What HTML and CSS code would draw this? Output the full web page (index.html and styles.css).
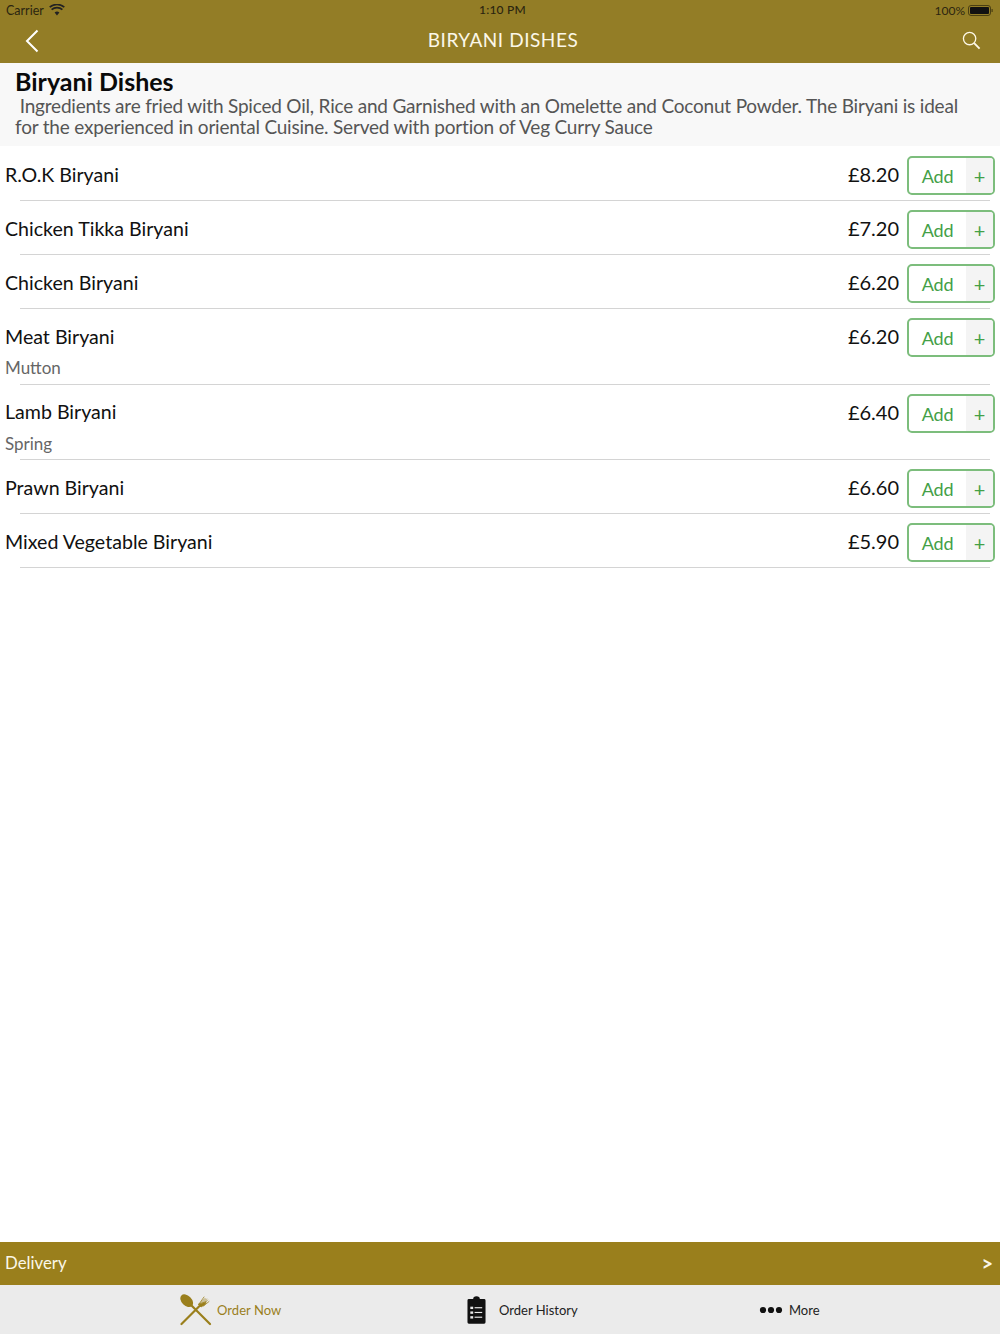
FILE: index.html
```html
<!DOCTYPE html>
<html lang="en">
<head>
<meta charset="utf-8">
<title>Biryani Dishes</title>
<link rel="stylesheet" href="styles.css">
</head>
<body>
<div class="app">
  <header class="topbar">
    <div class="status">
      <div class="status-left">
        <span>Carrier</span>
        <svg class="wifi" width="16" height="12" viewBox="0 0 16 12"><path d="M8 11.500 5.600 8.600a3.800 3.800 0 0 1 4.800 0z" fill="#222"/><path d="M2.600 5.600a8.200 8.200 0 0 1 10.800 0M.7 3.200a11.200 11.200 0 0 1 14.600 0" fill="none" stroke="#222" stroke-width="1.700"/></svg>
      </div>
      <span class="status-time">1:10 PM</span>
      <div class="status-right">
        <span>100%</span>
        <svg width="25" height="11" viewBox="0 0 25 11"><rect x=".5" y=".5" width="22" height="10" rx="2.500" fill="none" stroke="#4a3f12"/><rect x="2" y="2" width="19" height="7" rx="1" fill="#111"/><rect x="23.500" y="4" width="1.200" height="3" fill="#4a3f12"/></svg>
      </div>
    </div>
    <nav class="nav">
      <svg class="back" width="14" height="24" viewBox="0 0 14 24"><path d="M12.500 1.500 2 12l10.500 10.500" fill="none" stroke="#fff" stroke-width="2"/></svg>
      <h1 class="nav-title">BIRYANI DISHES</h1>
      <svg class="search" width="19" height="19" viewBox="0 0 20 20"><circle cx="8" cy="8" r="6.500" fill="none" stroke="#fdf8e6" stroke-width="1.400"/><path d="m12.800 12.800 5.700 5.700" stroke="#fdf8e6" stroke-width="2"/></svg>
    </nav>
  </header>

  <section class="intro">
    <h2 class="intro-title">Biryani Dishes</h2>
    <p class="intro-text">&nbsp;Ingredients are fried with Spiced Oil, Rice and Garnished with an Omelette and Coconut Powder. The Biryani is ideal for the experienced in oriental Cuisine. Served with portion of Veg Curry Sauce</p>
  </section>

  <main class="list">
    <div class="row">
      <div class="row-main"><span class="dish">R.O.K Biryani</span><span class="price">£8.20</span><div class="add"><span class="add-label">Add</span><span class="add-plus">+</span></div></div>
    </div>
    <div class="row">
      <div class="row-main"><span class="dish">Chicken Tikka Biryani</span><span class="price">£7.20</span><div class="add"><span class="add-label">Add</span><span class="add-plus">+</span></div></div>
    </div>
    <div class="row">
      <div class="row-main"><span class="dish">Chicken Biryani</span><span class="price">£6.20</span><div class="add"><span class="add-label">Add</span><span class="add-plus">+</span></div></div>
    </div>
    <div class="row row-sub">
      <div class="row-main"><span class="dish">Meat Biryani</span><span class="price">£6.20</span><div class="add"><span class="add-label">Add</span><span class="add-plus">+</span></div></div>
      <div class="sub">Mutton</div>
    </div>
    <div class="row row-sub">
      <div class="row-main"><span class="dish">Lamb Biryani</span><span class="price">£6.40</span><div class="add"><span class="add-label">Add</span><span class="add-plus">+</span></div></div>
      <div class="sub">Spring</div>
    </div>
    <div class="row">
      <div class="row-main"><span class="dish">Prawn Biryani</span><span class="price">£6.60</span><div class="add"><span class="add-label">Add</span><span class="add-plus">+</span></div></div>
    </div>
    <div class="row">
      <div class="row-main"><span class="dish">Mixed Vegetable Biryani</span><span class="price">£5.90</span><div class="add"><span class="add-label">Add</span><span class="add-plus">+</span></div></div>
    </div>
  </main>

  <div class="delivery"><span>Delivery</span><span class="delivery-arrow">&gt;</span></div>

  <footer class="tabs">
    <div class="tab tab-order">
      <svg width="32" height="32" viewBox="0 0 32 32"><ellipse cx="6.700" cy="6.700" rx="7.500" ry="5" transform="rotate(45 6.700 6.700)" fill="#9a7f1c"/><path d="M8 8 30 30M1.500 30 20 11.500" fill="none" stroke="#9a7f1c" stroke-width="2.200" stroke-linecap="round"/><path d="M18.500 10.500 21 13l4-2.500 1-2.500zM20 9.500 25 4.500M22 11.500 27.500 6M21 10.500 26.500 5M23.500 12 29 7.500M19 10 24 3" fill="#9a7f1c" stroke="#9a7f1c" stroke-width=".8" stroke-linecap="round"/></svg>
      <span class="tab-label tab-active">Order Now</span>
    </div>
    <div class="tab tab-history">
      <svg width="19" height="28" viewBox="0 0 20 29"><path d="M2 3h4.500a3.500 3 0 0 1 7 0H18a1.500 1.500 0 0 1 1.500 1.500v23A1.500 1.500 0 0 1 18 29H2a1.500 1.500 0 0 1-1.500-1.500v-23A1.500 1.500 0 0 1 2 3z" fill="#111"/><g fill="#ebebeb"><rect x="3.500" y="11" width="3" height="2.500"/><rect x="3.500" y="16" width="3" height="2.500"/><rect x="3.500" y="21" width="3" height="2.500"/><rect x="8" y="11.500" width="8" height="1.200"/><rect x="8" y="16.500" width="8" height="1.200"/><rect x="8" y="21.500" width="8" height="1.200"/></g></svg>
      <span class="tab-label">Order History</span>
    </div>
    <div class="tab tab-more">
      <svg width="24" height="8" viewBox="0 0 24 8"><circle cx="4" cy="4" r="3.100" fill="#111"/><circle cx="12" cy="4" r="3.100" fill="#111"/><circle cx="20" cy="4" r="3.100" fill="#111"/></svg>
      <span class="tab-label">More</span>
    </div>
  </footer>
</div>
</body>
</html>
```
FILE: styles.css
```css
* { box-sizing: border-box; }
html, body { margin: 0; padding: 0; }
body { font-family: "Lato", "Liberation Sans", sans-serif; background: #fff; color: #111; }
.app { width: 1000px; height: 1334px; display: flex; flex-direction: column; overflow: hidden; }

.topbar { height: 63px; background: #937d26; flex: none; }
.status { height: 20px; display: flex; justify-content: space-between; align-items: center; padding: 0 7px 0 6px; font-size: 12.500px; color: #2b2510; position: relative; }
.status-left, .status-right { display: flex; align-items: center; gap: 5px; }
.status-right { gap: 3px; font-size: 12px; }
.status-time { position: absolute; left: 479px; top: 2px; font-size: 12px; font-weight: 500; letter-spacing: .2px; }
.nav { height: 43px; display: flex; align-items: center; justify-content: space-between; padding: 0 19px 2px 25px; position: relative; }
.nav-title { position: absolute; left: 0; right: -6px; top: 8px; margin: 0; text-align: center; font-size: 19px; line-height: 24px; font-weight: 400; color: #fbf7e8; letter-spacing: .55px; }

.intro { height: 83px; background: #f8f8f8; padding: 5px 15px 0; flex: none; }
.intro-title { margin: 0; font-size: 25px; line-height: 27px; font-weight: 700; color: #0a0a0a; }
.intro-text { margin: 0; font-size: 19px; line-height: 21px; color: #555; letter-spacing: -.2px; }

.list { flex: 1; }
.row { height: 54px; padding: 10px 5px 0; position: relative; }
.row::after { content: ""; position: absolute; left: 20px; right: 10px; bottom: -1px; height: 1px; background: #d4d4d4; }
.row-sub { height: 75.500px; }
.row-main { display: flex; align-items: center; height: 39px; }
.dish { flex: 1; font-size: 19.600px; color: #111; margin-bottom: 3px; }
.price { font-size: 20px; color: #111; margin: 0 8px 3px 0; }
.add { width: 88px; height: 39px; border: 2px solid #7cbd7c; border-radius: 5px; display: flex; overflow: hidden; color: #43a047; background: #fff; }
.add-label { flex: 1; font-size: 18px; line-height: 37px; letter-spacing: -.2px; text-align: center; }
.add-plus { width: 27px; background: #f4f4f4; font-size: 20px; line-height: 37px; text-align: center; }
.sub { font-size: 17px; color: #666; margin-top: 0; }

.delivery { height: 43px; background: #9a7f1c; color: #fbf7e8; display: flex; align-items: center; justify-content: space-between; padding: 0 7px 2px 5px; font-size: 16.800px; flex: none; }
.delivery-arrow { font-weight: 700; font-size: 20px; }
.tabs { height: 49px; background: #ebebeb; position: relative; flex: none; }
.tab { display: flex; align-items: center; gap: 5px; position: absolute; top: 50%; transform: translateY(-50%); }
.tab-order { left: 180px; }
.tab-history { left: 467px; gap: 13px; }
.tab-more { left: 759px; gap: 6px; }
.tab-label { font-size: 13px; color: #222; line-height: 16px; }
.tab-active { color: #9a7f1c; letter-spacing: .05px; }
```
